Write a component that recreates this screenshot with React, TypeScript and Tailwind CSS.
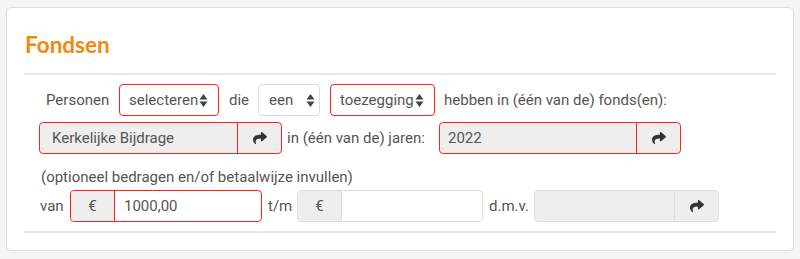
import React from "react";
import { FaShare } from "react-icons/fa";

const Arrows = () => (
  <svg width="9" height="15" viewBox="0 0 9 15" className="ml-[1px]">
    <path d="M4.5 1 L8.5 6.5 L0.5 6.5 Z" fill="#444" />
    <path d="M4.5 14 L8.5 8.5 L0.5 8.5 Z" fill="#444" />
  </svg>
);

const Sel = ({ text, red, w, pad }: { text: string; red?: boolean; w: number; pad?: string }) => (
  <div
    className={`flex h-[32px] items-center rounded-[4px] border bg-white ${red ? "border-[#ff2020]" : "border-[#ddd]"} ${pad ?? "pl-[10px]"}`}
    style={{ width: w }}
  >
    <span className="text-[#555]">{text}</span>
    <Arrows />
  </div>
);

export default function App() {
  return (
    <div className="min-h-[259px] w-[800px] bg-[#f5f5f5] pt-[7px] pl-[6px] text-[15px] text-[#555]" style={{ fontFamily: "Roboto, 'Liberation Sans', sans-serif" }}>
      <div className="h-[244px] w-[788px] rounded-[5px] border border-[#dcdcdc] bg-white px-[17px]">
        <div className="pt-[22px] pl-[1px] text-[22.5px] font-bold leading-[30px] text-[#ef8a0e]" style={{ fontFamily: "Lato, 'Open Sans', sans-serif" }}>
          Fondsen
        </div>
        <div className="mt-[13px] h-[2px] bg-[#e6e6e6]" />
        <div className="pl-[15px] pt-[9px]">
          <div className="flex h-[32px] items-center">
            <div className="w-[80px] pl-[7px]">Personen</div>
            <Sel text="selecteren" red w={100} pad="pl-[9px]" />
            <div className="w-[39px] pl-[10px]">die</div>
            <Sel text="een" w={62} pad="pl-[10px] gap-[12px]" />
            <span className="w-[10px]" />
            <Sel text="toezegging" red w={105} pad="pl-[9px]" />
            <span className="ml-[9px]">hebben in (één van de) fonds(en):</span>
          </div>
          <div className="mt-[6px] flex h-[32px] items-center">
            <div className="flex h-[32px] w-[243px] rounded-[4px] border border-[#ff2020] bg-[#eeeeee]">
              <div className="flex flex-1 items-center pl-[12px]">Kerkelijke Bijdrage</div>
              <div className="flex w-[44px] items-center justify-center border-l border-[#ff2020] text-[#333]">
                <FaShare size={14} />
              </div>
            </div>
            <div className="w-[157px] pl-[5px]">in (één van de) jaren:</div>
            <div className="flex h-[32px] w-[242px] rounded-[4px] border border-[#ff2020] bg-[#eeeeee]">
              <div className="flex flex-1 items-center pl-[8px]">2022</div>
              <div className="flex w-[44px] items-center justify-center border-l border-[#ff2020] text-[#333]">
                <FaShare size={14} />
              </div>
            </div>
          </div>
          <div className="mt-[13px] pl-[2px] leading-[20px]">(optioneel bedragen en/of betaalwijze invullen)</div>
          <div className="mt-[3px] flex h-[32px] items-center">
            <div className="w-[31px] pl-[1px]">van</div>
            <div className="flex h-[32px] w-[192px] rounded-[4px] border border-[#ff2020] bg-white">
              <div className="flex w-[44px] items-center justify-center rounded-l-[4px] border-r border-[#ff2020] bg-[#eeeeee]">€</div>
              <div className="flex flex-1 items-center pl-[9px]">1000,00</div>
            </div>
            <div className="w-[35px] pl-[6px]">t/m</div>
            <div className="flex h-[32px] w-[186px] rounded-[4px] border border-[#ddd] bg-white">
              <div className="flex w-[44px] items-center justify-center rounded-l-[4px] border-r border-[#ddd] bg-[#eeeeee]">€</div>
              <div className="flex-1" />
            </div>
            <div className="w-[51px] pl-[6px]">d.m.v.</div>
            <div className="flex h-[32px] w-[185px] rounded-[4px] border border-[#ddd] bg-[#eeeeee]">
              <div className="flex-1" />
              <div className="flex w-[44px] items-center justify-center border-l border-[#ddd] text-[#333]">
                <FaShare size={14} />
              </div>
            </div>
          </div>
        </div>
        <div className="mt-[9px] h-[2px] bg-[#e6e6e6]" />
      </div>
    </div>
  );
}
